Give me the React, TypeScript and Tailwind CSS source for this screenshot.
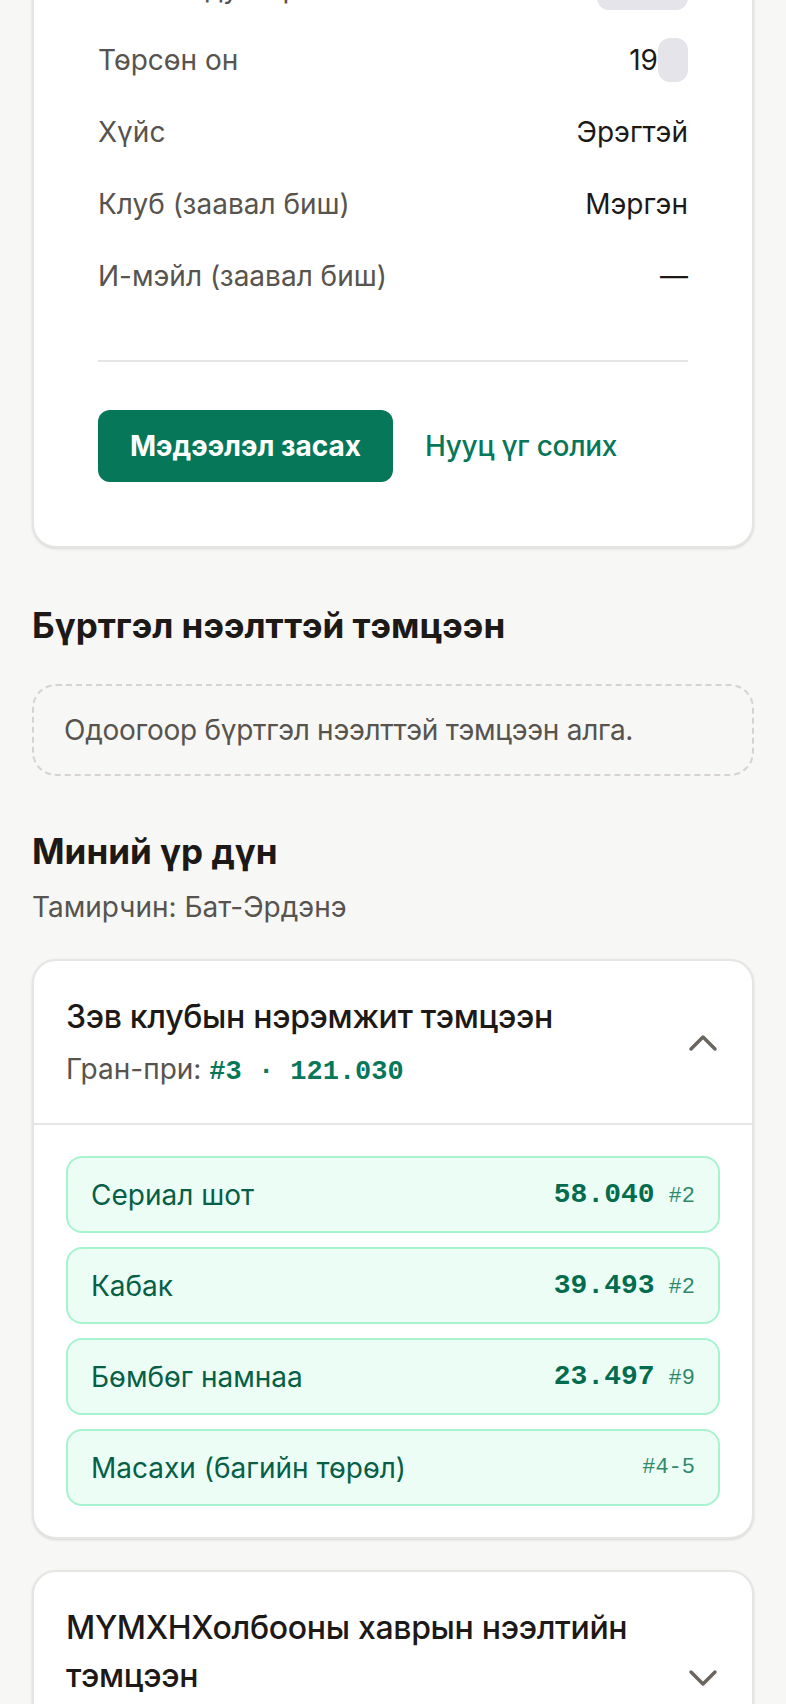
import React from 'react';

interface InfoRow {
  label: string;
  value: React.ReactNode;
}

interface EventResult {
  name: string;
  score?: string;
  place: string;
}

const Mask: React.FC<{ className: string }> = ({ className }) => (
  <span className={`block rounded-[12px] bg-[#e4e4ea] ${className}`} />
);

const Chevron: React.FC<{ up?: boolean }> = ({ up }) => (
  <svg
    className="-mr-[7px] h-12 w-12 shrink-0"
    viewBox="0 0 24 24"
    fill="none"
    stroke="#6b6560"
    strokeWidth={1.75}
    strokeLinecap="round"
    strokeLinejoin="round"
  >
    <path d={up ? 'M18 15l-6-6-6 6' : 'M6 9l6 6 6-6'} />
  </svg>
);

const rows: InfoRow[] = [
  { label: 'Утасны дугаар', value: <Mask className="h-[44px] w-[91px]" /> },
  {
    label: 'Төрсөн он',
    value: (
      <>
        19
        <Mask className="h-[44px] w-[30px]" />
      </>
    ),
  },
  { label: 'Хүйс', value: 'Эрэгтэй' },
  { label: 'Клуб (заавал биш)', value: 'Мэргэн' },
  { label: 'И-мэйл (заавал биш)', value: '—' },
];

const results: EventResult[] = [
  { name: 'Сериал шот', score: '58.040', place: '#2' },
  { name: 'Кабак', score: '39.493', place: '#2' },
  { name: 'Бөмбөг намнаа', score: '23.497', place: '#9' },
  { name: 'Масахи (багийн төрөл)', place: '#4-5' },
];

const mono = "font-['Liberation_Mono','DejaVu_Sans_Mono',monospace]";

export default function App() {
  return (
    <div className="min-h-screen overflow-hidden bg-[#f7f7f5] font-['Inter','Liberation_Sans',sans-serif] text-[#1c1917]">
      <main className="-mt-[114px] px-8 pb-24">
        {/* profile card */}
        <section className="rounded-[24px] border-2 border-[#e7e5e4] bg-white p-16 shadow-sm">
          <div>
            {rows.map((row) => (
              <div key={row.label} className="flex h-[72px] items-center justify-between text-[28px]">
                <span className="text-[#57534e]">{row.label}</span>
                <span className="flex items-center text-[#1c1917]">{row.value}</span>
              </div>
            ))}
          </div>
          <div className="mt-12 border-t-2 border-[#e7e5e4] pt-12">
            <div className="flex items-center gap-8">
              <button className="h-[72px] rounded-[12px] bg-[#07775a] px-8 text-[28px] font-bold text-white">
                Мэдээлэл засах
              </button>
              <button className="text-[28px] font-medium tracking-[-0.01em] text-[#07775a]">Нууц үг солих</button>
            </div>
          </div>
        </section>

        {/* open registrations */}
        <h2 className="mt-[53px] text-[35px] leading-[48px] font-bold">Бүртгэл нээлттэй тэмцээн</h2>
        <div className="mt-[35px] rounded-[24px] border-2 border-dashed border-[#d6d3d1] px-[30px] py-[23px] text-[28px] leading-[42px] tracking-[-0.01em] text-[#57534e]">
          Одоогоор бүртгэл нээлттэй тэмцээн алга.
        </div>

        {/* my results */}
        <h2 className="mt-[51px] text-[35px] leading-[48px] font-bold">Миний үр дүн</h2>
        <p className="mt-[11px] text-[28px] leading-[42px] text-[#57534e]">Тамирчин: Бат-Эрдэнэ</p>

        <div className="mt-[31px] flex flex-col gap-[31px]">
          <div className="rounded-[24px] border-2 border-[#e7e5e4] bg-white shadow-sm">
            <div className="flex items-center gap-4 px-8 pt-8 pb-[30px]">
              <div className="flex-1">
                <div className="text-[32px] leading-[48px] font-medium tracking-[-0.01em]">Зэв клубын нэрэмжит тэмцээн</div>
                <div className="mt-[7px] text-[28px] leading-[42px] text-[#57534e]">
                  Гран-при: <span className={`${mono} text-[27px] font-bold text-[#07775a]`}>#3 · 121.030</span>
                </div>
              </div>
              <Chevron up />
            </div>
            <div className="flex flex-col gap-[14px] border-t-2 border-[#e7e5e4] px-8 pt-[31px] pb-[31px]">
              {results.map((r) => (
                <div
                  key={r.name}
                  className="flex h-[77px] items-center justify-between rounded-[16px] border-2 border-[#a7f3d0] bg-[#ecfdf5] px-[23px]"
                >
                  <span className="text-[28px] text-[#065f46]">{r.name}</span>
                  <span className="flex items-baseline gap-[14px]">
                    {r.score && <span className={`${mono} text-[28px] font-bold text-[#046c4e]`}>{r.score}</span>}
                    <span className={`${mono} text-[22px] text-[#2f8a6c]`}>{r.place}</span>
                  </span>
                </div>
              ))}
            </div>
          </div>

          <div className="rounded-[24px] border-2 border-[#e7e5e4] bg-white shadow-sm">
            <div className="flex items-center gap-4 px-8 pt-8 pb-[30px]">
              <div className="flex-1">
                <div className="text-[32px] leading-[48px] font-medium tracking-[-0.01em]">
                  МҮМХНХолбооны хаврын нээлтийн тэмцээн
                </div>
                <div className="mt-[7px] text-[28px] leading-[42px] text-[#57534e]">
                  Гран-при: <span className={`${mono} text-[27px] font-bold text-[#07775a]`}>#5 · 98.412</span>
                </div>
              </div>
              <Chevron />
            </div>
          </div>
        </div>
      </main>
    </div>
  );
}
